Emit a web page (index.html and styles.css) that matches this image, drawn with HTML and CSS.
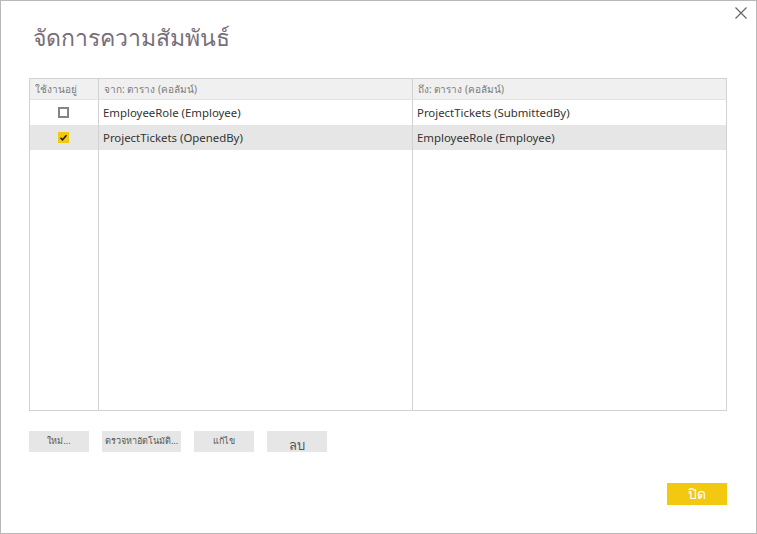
FILE: index.html
```html
<!DOCTYPE html>
<html lang="th">
<head>
<meta charset="utf-8">
<link rel="stylesheet" href="styles.css">
</head>
<body>
<div class="dialog">
  <div class="topbar">
    <button class="close-x" aria-label="ปิด">
      <svg width="12" height="12" viewBox="0 0 12 12"><path d="M0.5 0.5 L11.5 11.5 M11.5 0.5 L0.5 11.5" stroke="#666" stroke-width="1.2" fill="none"/></svg>
    </button>
  </div>
  <h1 class="title">จัดการความสัมพันธ์</h1>
  <div class="grid">
    <div class="cell head">ใช้งานอยู่</div>
    <div class="cell head">จาก: ตาราง (คอลัมน์)</div>
    <div class="cell head last">ถึง: ตาราง (คอลัมน์)</div>

    <div class="cell chk"><span class="box"></span></div>
    <div class="cell">EmployeeRole (Employee)</div>
    <div class="cell last">ProjectTickets (SubmittedBy)</div>

    <div class="cell chk sel"><span class="box on"><svg width="11" height="11" viewBox="0 0 11 11"><path d="M2.5 5.8 L4.5 7.8 L8.5 3.3" stroke="#1a1a1a" stroke-width="1.5" fill="none"/></svg></span></div>
    <div class="cell sel">ProjectTickets (OpenedBy)</div>
    <div class="cell sel last">EmployeeRole (Employee)</div>

    <div class="cell fill"></div>
    <div class="cell fill"></div>
    <div class="cell fill last"></div>
  </div>
  <div class="actions">
    <button class="btn">ใหม่...</button>
    <button class="btn wide">ตรวจหาอัตโนมัติ...</button>
    <button class="btn">แก้ไข</button>
    <button class="btn big">ลบ</button>
  </div>
  <div class="footer">
    <button class="primary">ปิด</button>
  </div>
</div>
</body>
</html>
```
FILE: styles.css
```css
html, body {
  margin: 0;
  padding: 0;
  background: #ffffff;
}
body {
  font-family: "Noto Sans", "DejaVu Sans", sans-serif;
}
.dialog {
  width: 757px;
  height: 534px;
  box-sizing: border-box;
  border: 1px solid #b8b8b8;
  padding: 0 29px 0 28px;
  display: flex;
  flex-direction: column;
}
.topbar {
  display: flex;
  justify-content: flex-end;
  height: 0;
}
.close-x {
  margin: 6px -20px 0 0;
  padding: 0;
  border: 0;
  background: transparent;
  width: 12px;
  height: 12px;
  display: flex;
}
.title {
  margin: 18px 0 0 4px;
  font-size: 23px;
  line-height: 36px;
  height: 36px;
  font-weight: normal;
  color: #776e7b;
}
.grid {
  margin-top: 23px;
  height: 333px;
  box-sizing: border-box;
  display: grid;
  grid-template-columns: 69px 314px 1fr;
  grid-template-rows: 21px 25px 25px 1fr;
  border: 1px solid #d2d2d2;
  border-right: 0;
}
.cell {
  border-right: 1px solid #d2d2d2;
  font-size: 11.4px;
  color: #333333;
  display: flex;
  align-items: center;
  padding-left: 4px;
  white-space: nowrap;
  overflow: hidden;
}
.head {
  background: #f0f0f0;
  color: #7a7a7a;
  font-size: 10px;
  border-bottom: 1px solid #e2e2e2;
  padding-left: 5px;
}
.sel {
  background: #e6e6e6;
}
.chk {
  justify-content: center;
  padding-left: 0;
}
.box {
  width: 11px;
  height: 11px;
  box-sizing: border-box;
  border: 2px solid #858585;
  display: block;
  margin-right: 2px;
}
.box.on {
  border: 0;
  background: #f2c811;
}
.box svg {
  display: block;
}
.actions {
  margin-top: 20px;
  display: flex;
  gap: 13px;
}
.btn {
  height: 21px;
  width: 60px;
  border: 0;
  background: #e6e6e6;
  color: #555555;
  font-family: inherit;
  font-size: 9px;
  padding: 0 0 2px;
}
.btn.wide {
  width: 79px;
}
.btn.big {
  font-size: 13px;
  padding-top: 4px;
}
.footer {
  margin-top: 31px;
  display: flex;
  justify-content: flex-end;
}
.primary {
  width: 60px;
  height: 22px;
  border: 0;
  background: #f2c811;
  color: #ffffff;
  font-family: inherit;
  font-size: 14px;
  padding: 0;
}
```
